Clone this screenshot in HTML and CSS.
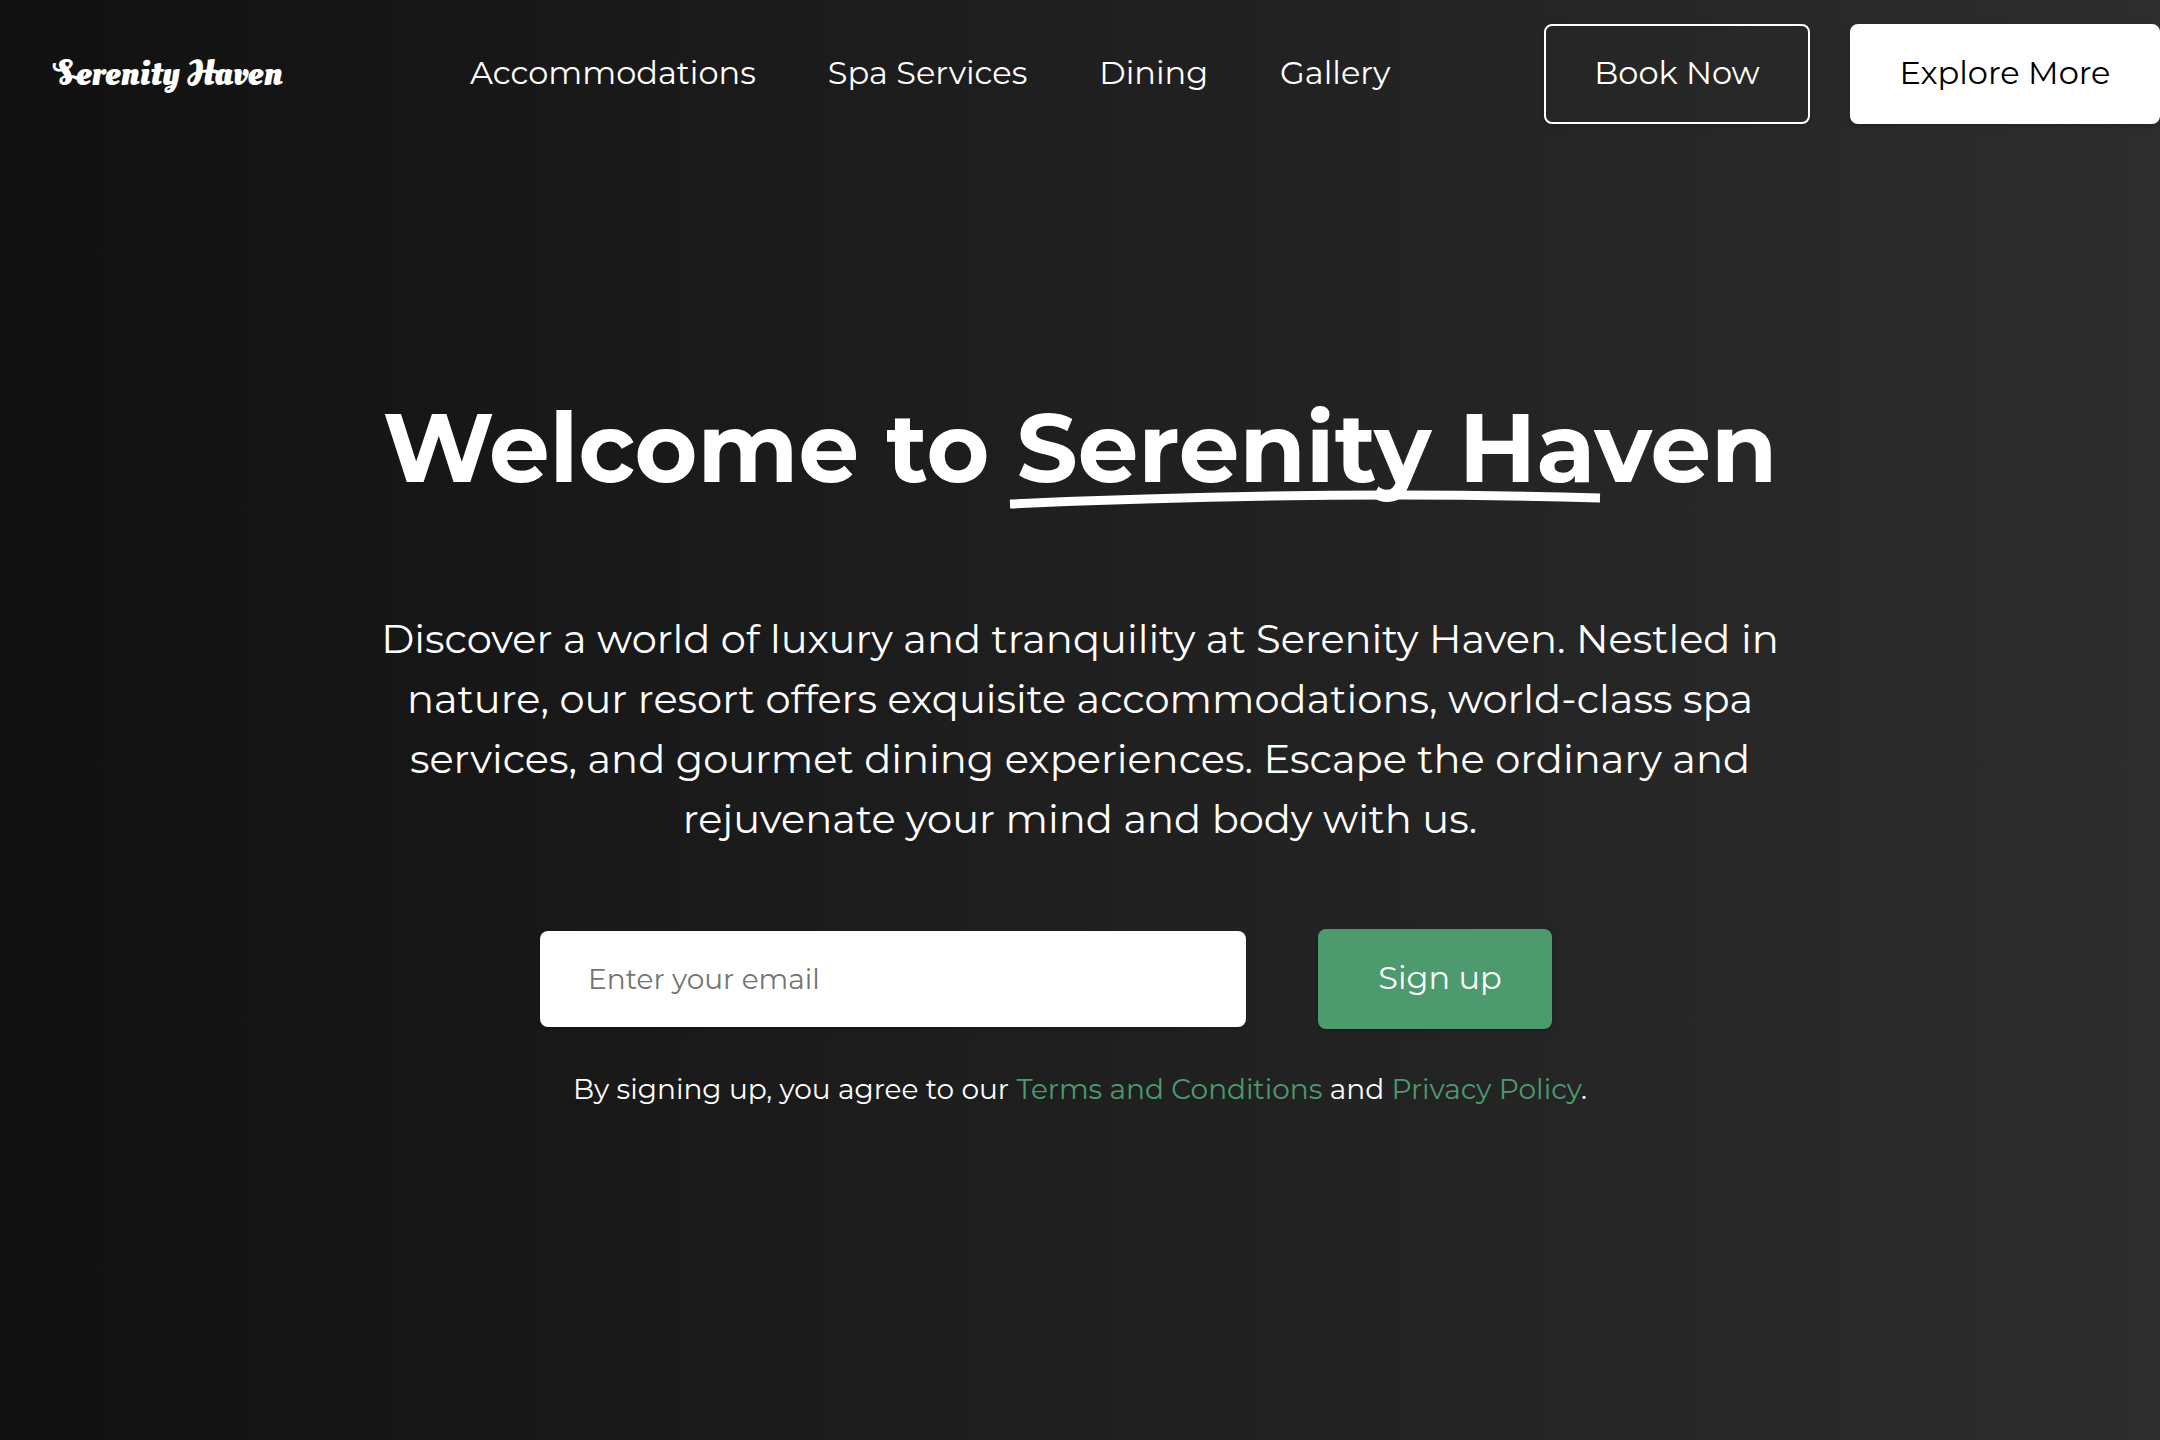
FILE: index.html
```html
<!DOCTYPE html>
<html lang="en">
<head>
  <meta charset="utf-8">
  <meta name="viewport" content="width=device-width, initial-scale=1">
  <title>Serenity Haven</title>
  <link rel="stylesheet" href="styles.css">
</head>
<body>
  <header class="header">
    <a class="logo" href="#">Serenity Haven</a>
    <nav class="nav" aria-label="Main">
      <a href="#">Accommodations</a>
      <a href="#">Spa Services</a>
      <a href="#">Dining</a>
      <a href="#">Gallery</a>
    </nav>
    <div class="actions">
      <button class="button button-outline" type="button">Book Now</button>
      <button class="button button-light" type="button">Explore More</button>
    </div>
  </header>
  <main class="hero">
    <h1 class="title">Welcome to <span class="marked">Serenity Haven<svg class="stroke" viewBox="0 0 590 20" preserveAspectRatio="none" aria-hidden="true"><path d="M0 13Q310 -1 590 7" fill="none" stroke="#fff" stroke-width="9"/></svg></span></h1>
    <p class="intro">Discover a world of luxury and tranquility at Serenity Haven. Nestled in nature, our resort offers exquisite accommodations, world-class spa services, and gourmet dining experiences. Escape the ordinary and rejuvenate your mind and body with us.</p>
    <form class="signup">
      <input class="email" type="email" placeholder="Enter your email" aria-label="Email">
      <button class="button button-green" type="submit">Sign up</button>
    </form>
    <p class="terms">By signing up, you agree to our <a href="#">Terms and Conditions</a> and <a href="#">Privacy Policy</a>.</p>
  </main>
</body>
</html>
```
FILE: styles.css
```css
* {
  box-sizing: border-box;
}

body {
  margin: 0;
  min-height: 100vh;
  background: linear-gradient(to right, #111, #2d2d2d);
  color: #fff;
  font-family: Montserrat, Inter, sans-serif;
  font-size: 32px;
}

a {
  color: inherit;
  text-decoration: none;
}

.header {
  display: flex;
  align-items: center;
  padding: 24px 0 24px 54px;
}

.logo {
  flex: 0 0 416px;
  font: bold 35px/48px "Oleo Script Swash Caps", "Oleo Script", "Liberation Serif", serif;
}

.nav {
  display: flex;
  gap: 72px;
  padding-bottom: 2px;
  line-height: 48px;
}

.actions {
  display: flex;
  gap: 40px;
  margin-left: auto;
}

.button {
  height: 100px;
  padding: 0 46px 4px;
  border: 2px solid #fff;
  border-radius: 8px;
  box-shadow: 0 2px 4px rgba(0, 0, 0, 0.2);
  color: #fff;
  font: inherit;
  white-space: nowrap;
}

.button-outline {
  min-width: 266px;
  background: transparent;
}

.button-light {
  min-width: 310px;
  background: #fff;
  color: #000;
}

.button-green {
  min-width: 234px;
  padding-left: 56px;
  border-color: #4c9a6e;
  background: #4c9a6e;
}

.hero {
  display: flex;
  flex-direction: column;
  align-items: center;
  padding: 228px 24px 96px;
  text-align: center;
}

.title {
  margin: 0 0 89px;
  font-size: 96px;
  font-weight: 700;
  line-height: 144px;
}

.marked {
  position: relative;
}

.stroke {
  position: absolute;
  bottom: -5px;
  left: -6px;
  width: 590px;
  height: 20px;
  overflow: visible;
}

.intro {
  max-width: 1440px;
  margin: 0 0 80px;
  font-size: 40px;
  line-height: 60px;
}

.signup {
  display: flex;
  align-items: center;
  gap: 72px;
  width: 100%;
  max-width: 1080px;
}

.email {
  flex: 0 1 706px;
  min-width: 0;
  height: 96px;
  padding: 0 48px;
  border: 0;
  border-radius: 8px;
  box-shadow: 0 2px 4px rgba(0, 0, 0, 0.2);
  background: #fff;
  color: #222;
  font: inherit;
  font-size: 28px;
}

.email::placeholder {
  color: #757575;
  opacity: 1;
}

.terms {
  margin: 40px 0 0;
  font-size: 28px;
  line-height: 40px;
}

.terms a {
  color: #4c9a6e;
}
```
